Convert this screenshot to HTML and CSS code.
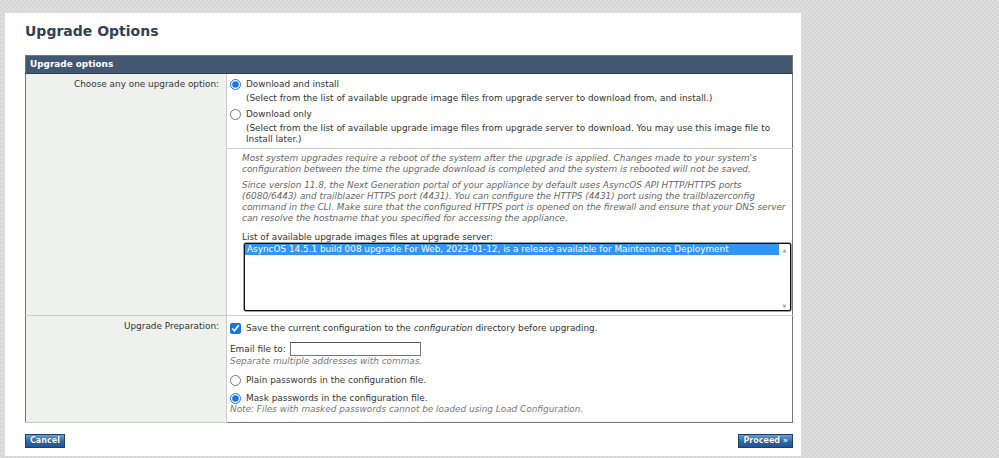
FILE: index.html
```html
<!DOCTYPE html>
<html>
<head>
<meta charset="utf-8">
<link rel="stylesheet" href="styles.css">
</head>
<body>
<div class="panel">
  <h1 class="title">Upgrade Options</h1>
  <table class="form">
    <tr><th colspan="2" class="head">Upgrade options</th></tr>
    <tr>
      <td class="label" rowspan="2">Choose any one upgrade option:</td>
      <td class="opts">
        <div class="opt"><input type="radio" name="mode" checked><span>Download and install</span></div>
        <div class="desc">(Select from the list of available upgrade image files from upgrade server to download from, and install.)</div>
        <div class="opt opt2"><input type="radio" name="mode"><span>Download only</span></div>
        <div class="desc">(Select from the list of available upgrade image files from upgrade server to download. You may use this image file to<br>Install later.)</div>
      </td>
    </tr>
    <tr>
      <td class="info">
        <p class="note">Most system upgrades require a reboot of the system after the upgrade is applied. Changes made to your system's<br>configuration between the time the upgrade download is completed and the system is rebooted will not be saved.</p>
        <p class="note p2">Since version 11.8, the Next Generation portal of your appliance by default uses AsyncOS API HTTP/HTTPS ports<br>(6080/6443) and trailblazer HTTPS port (4431). You can configure the HTTPS (4431) port using the trailblazerconfig<br>command in the CLI. Make sure that the configured HTTPS port is opened on the firewall and ensure that your DNS server<br>can resolve the hostname that you specified for accessing the appliance.</p>
        <div class="listlabel">List of available upgrade images files at upgrade server:</div>
        <div class="listbox">
          <div class="items"><div class="item sel">AsyncOS 14.5.1 build 008 upgrade For Web, 2023-01-12, is a release available for Maintenance Deployment</div></div>
          <div class="scroll"><span class="arr">&#9650;</span><span class="arr">&#9660;</span></div>
        </div>
      </td>
    </tr>
    <tr>
      <td class="label">Upgrade Preparation:</td>
      <td class="prep">
        <div class="opt"><input type="checkbox" checked><span>Save the current configuration to the <i>configuration</i> directory before upgrading.</span></div>
        <div class="email"><span>Email file to:</span><input type="text" class="field"></div>
        <div class="hint">Separate multiple addresses with commas.</div>
        <div class="opt r1"><input type="radio" name="pw"><span>Plain passwords in the configuration file.</span></div>
        <div class="opt r2"><input type="radio" name="pw" checked><span>Mask passwords in the configuration file.</span></div>
        <div class="hint">Note: Files with masked passwords cannot be loaded using Load Configuration.</div>
      </td>
    </tr>
  </table>
  <div class="actions">
    <button class="btn">Cancel</button>
    <button class="btn">Proceed &raquo;</button>
  </div>
</div>
</body>
</html>
```
FILE: styles.css
```css
html, body {
  margin: 0;
  padding: 0;
}
body {
  width: 999px;
  height: 458px;
  overflow: hidden;
  font-family: "DejaVu Sans", Verdana, sans-serif;
  font-size: 8.9px;
  color: #333;
  background-color: #dedede;
  background-image:
    linear-gradient(45deg, #d6d6d6 25%, transparent 25%, transparent 75%, #d6d6d6 75%),
    linear-gradient(45deg, #d6d6d6 25%, transparent 25%, transparent 75%, #d6d6d6 75%);
  background-size: 4px 4px;
  background-position: 0 0, 2px 2px;
}
.panel {
  margin: 13px 0 0 5px;
  width: 796px;
  height: 443px;
  background: #fff;
  padding: 0 0 0 20px;
  box-sizing: border-box;
}
.title {
  margin: 0;
  padding: 9px 0 0 0;
  height: 33px;
  font-size: 14px;
  line-height: 18px;
  font-weight: bold;
  color: #2f4256;
}
.form {
  width: 768px;
  border-collapse: collapse;
  border: 1px solid #777;
}
.form td, .form th {
  padding: 0;
  vertical-align: top;
}
.head {
  background: #425872;
  color: #fff;
  text-align: left;
  font-weight: bold;
  font-size: 8.9px;
  height: 17px;
  line-height: 17px;
  padding: 0 0 0 4px !important;
  border-bottom: 1px solid #2d3f55;
}
.label {
  width: 195px;
  background: #eef1ed;
  text-align: right;
  padding: 5px 7px 0 0 !important;
  line-height: 11px;
  border-right: 1px solid #c8cbc8;
  border-bottom: 1px solid #c8cbc8;
  white-space: nowrap;
}
.opts {
  padding: 4px 2px 2px 3px !important;
  border-bottom: 1px solid #c8cbc8;
  height: 68px;
}
.opt {
  display: flex;
  align-items: center;
  height: 13px;
  line-height: 13px;
  white-space: nowrap;
}
.opt input {
  margin: 0 5px 0 0;
  width: 11px;
  height: 11px;
  accent-color: #1a73e8;
}
.opt2 {
  margin-top: 4px;
}
.desc {
  padding-left: 16px;
  line-height: 11px;
  margin-top: 2px;
  white-space: nowrap;
}
.info {
  padding: 4px 1px 4px 15px !important;
  border-bottom: 1px solid #c8cbc8;
}
.note {
  margin: 0;
  font-style: italic;
  color: #666;
  line-height: 11px;
  white-space: nowrap;
}
.p2 {
  margin-top: 5px;
}
.listlabel {
  margin-top: 8px;
  line-height: 11px;
}
.listbox {
  display: flex;
  width: 547px;
  height: 68px;
  box-sizing: border-box;
  border: 1px solid #111;
  border-radius: 2px;
  box-shadow: 0 0 0 0.5px #444;
  margin-left: 2px;
  background: #fff;
}
.items {
  flex: 1;
  padding: 0;
}
.item {
  line-height: 11px;
  padding-left: 2px;
  white-space: nowrap;
}
.sel {
  background: #3294f5;
  color: #fff;
}
.scroll {
  width: 11px;
  display: flex;
  flex-direction: column;
  justify-content: space-between;
  align-items: center;
  padding: 3px 0 1px 0;
}
.arr {
  font-size: 5px;
  line-height: 6px;
  color: #a8a8a8;
}
.prep {
  padding: 6px 2px 7px 3px !important;
}
.email {
  display: flex;
  align-items: center;
  height: 14px;
  margin-top: 7px;
  white-space: nowrap;
}
.field {
  margin: 0 0 0 4px;
  width: 131px;
  height: 14px;
  box-sizing: border-box;
  border: 1px solid #767676;
  border-top-color: #555;
  padding: 0;
}
.hint {
  font-style: italic;
  color: #777;
  line-height: 11px;
  white-space: nowrap;
}
.r1 {
  margin-top: 7px;
}
.r2 {
  margin-top: 5px;
}
.r2 + .hint {
  margin-top: -1px;
}
.actions {
  display: flex;
  justify-content: space-between;
  width: 768px;
  margin-top: 11px;
}
.btn {
  font-family: "DejaVu Sans", Verdana, sans-serif;
  font-size: 8px;
  font-weight: bold;
  color: #fff;
  height: 14px;
  line-height: 12px;
  padding: 0 4px;
  border: 1px solid #1f3f66;
  border-radius: 0;
  background: linear-gradient(#6b9ed4, #2d67a8 55%, #1f5595);
  text-shadow: 0 0 1px #123;
}
```
